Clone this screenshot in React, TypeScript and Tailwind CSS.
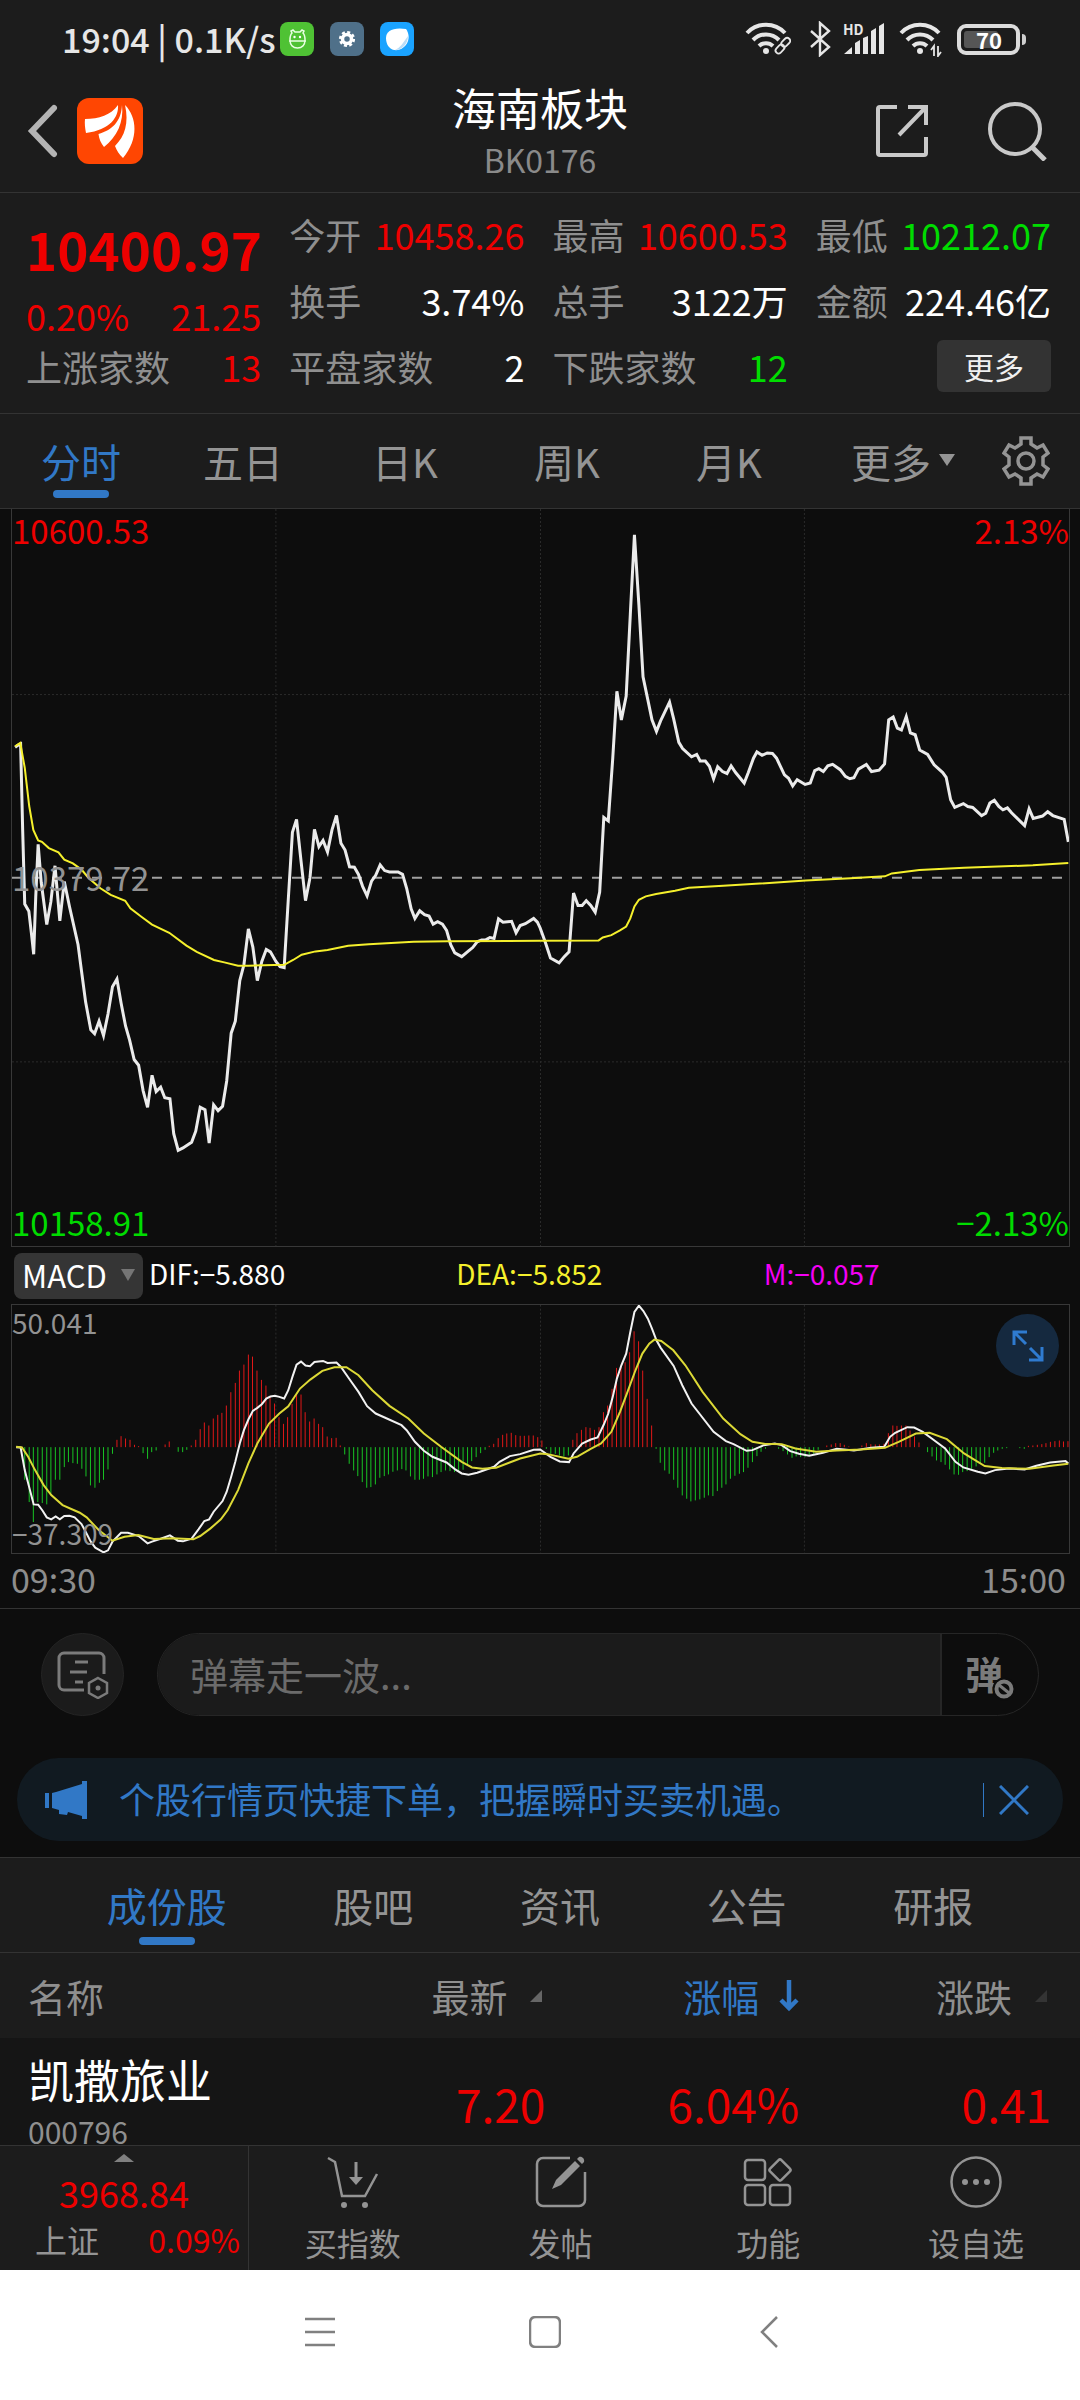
import React from "react";

const PRICE_LINE =
  "42,517 50,513 58,510 64,690 70,845 82,860 90,910 96,950 102,830 109,720 118,800 134,888 146,840 158,765 172,880 185,798 200,850 225,930 235,985 247,1050 262,1108 273,1116 286,1090 299,1120 312,1075 325,1018 338,1002 350,1052 363,1100 375,1130 388,1170 401,1182 414,1235 427,1270 440,1203 452,1237 465,1228 477,1250 492,1252 503,1325 516,1360 530,1355 555,1343 567,1320 580,1270 594,1275 606,1345 619,1265 632,1277 645,1268 657,1215 670,1115 682,1090 695,1005 707,972 720,897 733,935 746,1005 759,965 772,940 784,945 800,965 812,976 824,978 836,835 848,695 860,668 873,755 886,838 899,790 912,689 925,725 937,712 950,736 963,690 976,660 989,718 1001,732 1014,767 1028,768 1040,783 1052,808 1065,828 1078,797 1090,785 1103,763 1116,775 1130,778 1155,778 1168,783 1180,812 1193,855 1204,875 1218,859 1232,867 1245,870 1257,887 1270,882 1284,887 1296,900 1308,930 1320,947 1340,955 1360,943 1372,936 1385,924 1398,920 1410,920 1422,915 1434,917 1447,876 1460,883 1485,881 1498,905 1510,890 1525,886 1549,875 1560,883 1568,895 1583,925 1598,958 1623,968 1638,955 1652,945 1665,822 1678,848 1690,848 1702,838 1715,848 1728,862 1741,820 1753,664 1766,671 1779,540 1791,400 1804,460 1818,410 1830,240 1842,73 1855,220 1867,370 1881,418 1893,460 1906,484 1918,462 1944,423 1956,458 1971,507 1982,520 2008,537 2023,532 2033,546 2048,546 2060,557 2072,583 2084,558 2098,568 2111,572 2123,556 2136,570 2161,592 2173,570 2188,540 2198,527 2213,534 2228,529 2243,530 2255,540 2278,575 2290,582 2302,598 2315,585 2338,595 2353,592 2366,566 2378,562 2391,568 2404,556 2418,553 2440,564 2455,578 2468,583 2480,581 2493,563 2516,553 2531,568 2553,565 2569,552 2581,460 2594,454 2606,477 2618,481 2632,453 2644,487 2658,491 2671,523 2694,532 2713,554 2738,570 2748,580 2761,627 2773,643 2798,635 2811,641 2825,643 2851,660 2863,655 2875,634 2888,628 2901,641 2913,648 2926,644 2938,654 2976,681 2989,646 3001,666 3028,661 3043,652 3058,660 3091,668 3103,715";

const AVERAGE_LINE =
  "42,515 57,508 70,560 83,640 95,690 109,712 120,715 140,728 168,737 185,752 210,760 235,773 255,790 290,812 320,826 362,838 377,854 410,872 440,888 490,905 540,932 570,945 620,962 650,967 690,974 720,974 824,972 850,962 875,951 915,944 950,941 1010,932 1070,929 1200,924 1300,923 1568,922 1738,921 1750,915 1775,910 1800,900 1818,892 1830,875 1842,850 1855,836 1875,829 1905,824 1960,817 2000,811 2100,807 2340,796 2470,791 2570,787 2590,781 2670,774 2800,769 3000,764 3103,759";

const DIF_LINE =
  "45,651 58,652 70,720 96,823 109,824 122,842 134,862 147,868 160,859 172,868 185,858 200,857 215,862 235,882 247,905 262,935 275,953 299,967 312,961 325,935 350,908 370,908 401,918 427,940 440,935 465,926 492,916 515,932 530,934 555,926 575,898 592,873 606,868 619,845 645,813 657,785 670,740 682,695 695,640 707,600 720,568 733,542 746,533 759,522 772,505 784,499 797,497 810,500 824,505 836,480 848,440 860,403 873,394 886,406 899,408 912,395 937,392 950,398 976,397 989,410 1014,447 1040,485 1065,528 1090,550 1116,562 1165,585 1180,600 1204,635 1230,662 1255,680 1296,697 1320,717 1340,730 1360,734 1385,728 1434,710 1450,695 1480,678 1510,672 1549,659 1568,658 1598,680 1625,694 1652,696 1665,670 1690,640 1715,628 1735,622 1753,583 1766,550 1779,500 1791,445 1804,405 1818,370 1830,305 1842,245 1855,226 1868,242 1881,265 1893,295 1906,330 1918,352 1956,407 1981,465 2008,520 2072,605 2108,633 2130,642 2168,662 2185,660 2218,645 2250,640 2270,645 2295,663 2320,671 2350,677 2390,668 2430,656 2480,661 2530,653 2568,650 2585,620 2600,608 2635,591 2655,592 2680,605 2710,628 2745,655 2775,695 2798,712 2840,725 2862,730 2890,720 2930,715 2976,718 3010,707 3050,697 3095,693 3103,700";

const DEA_LINE =
  "45,650 62,652 80,680 100,720 125,765 147,795 180,825 230,848 250,862 285,900 325,932 360,920 400,915 445,927 500,925 560,928 580,918 610,895 640,868 660,840 690,780 720,700 746,640 780,580 810,550 836,528 870,475 900,448 935,422 970,411 1005,411 1040,435 1080,480 1130,527 1185,565 1230,610 1280,650 1340,695 1370,712 1400,716 1440,713 1510,685 1568,670 1590,672 1650,686 1675,680 1715,656 1745,640 1775,605 1800,545 1820,490 1845,420 1865,370 1885,340 1900,328 1920,332 1955,360 1990,405 2040,485 2100,565 2150,612 2185,635 2220,641 2270,642 2310,655 2370,665 2430,661 2500,658 2570,653 2610,635 2660,610 2700,608 2750,627 2800,670 2860,708 2910,714 2990,716 3060,706 3103,701";

/* One histogram value per trading minute, starting with the third minute. */
const MACD_BARS = [
  -98, -165, -225, -165, -168, -172, -140, -98, -98, -60, -45, -48, -50, -65, -88, -115, -122, -107, -98, -67, -20,
  22, 33, 26, 22, 7, 3, -18, -35, -15, -10, 0, 8, 17, 0, -14, -15, -8, 5, 22, 54, 74, 65, 86, 97, 103, 125, 165, 193,
  230, 248, 278, 272, 230, 202, 185, 150, 131, 90, 70, 90, 130, 160, 158, 105, 77, 86, 70, 60, 32, 27, 28, 5, -22,
  -50, -70, -87, -105, -122, -120, -112, -92, -87, -82, -74, -70, -66, -70, -88, -98, -98, -95, -88, -90, -82, -75,
  -70, -72, -75, -72, -68, -55, -42, -30, -18, -8, 4, 10, 27, 37, 41, 43, 36, 34, 34, 35, 35, 30, 20, -5, -20, -20,
  -25, -28, -25, 22, 42, 52, 60, 58, 52, 60, 105, 125, 175, 238, 245, 255, 285, 348, 318, 230, 145, 65, -5, -47, -70,
  -80, -98, -122, -145, -155, -163, -160, -157, -152, -145, -147, -132, -122, -112, -95, -86, -80, -75, -62, -45, -27,
  -14, -5, 0, 0, -5, -12, -22, -32, -28, -30, -30, -24, -20, -8, 0, 5, 8, 12, 12, 7, 2, 0, 0, 5, 12, 9, 8, 8, 10, 42,
  65, 64, 65, 65, 50, 32, 14, 0, -15, -28, -40, -45, -53, -67, -82, -83, -75, -72, -65, -58, -50, -47, -30, -17, -10,
  -5, -3, 0, 0, -3, -5, 4, 5, 7, 9, 12, 16, 18, 20, 17, 18, 16,
];

const barPath = (positive: boolean) =>
  MACD_BARS.map((v, i) =>
    v !== 0 && v > 0 === positive ? `M${Math.round(70 + i * 12.74)} 651v${-v}` : ""
  ).join("");

const GRID_X = [800, 1569, 2336];

function StatusBar() {
  return (
    <div className="flex h-[70px] items-center justify-between pt-2 pr-[54px] pl-[62px] text-[#e6e6e6]">
      <div className="flex items-center">
        <span className="text-[34px] leading-[40px] font-medium">19:04 | 0.1K/s</span>
        <div className="ml-1 flex gap-4">
          <svg viewBox="0 0 34 34" className="size-[34px]">
            <rect width="34" height="34" rx="8" fill="#4fc234" />
            <g fill="none" stroke="#e9ffe3" strokeWidth="1.5">
              <path d="M10 18c0-4 1-6 2-7l-1-2 2-1 2 2h5l2-2 2 1-1 2c1 1 2 3 2 7 0 5-3 8-7.500 8S10 23 10 18z" />
              <path d="M9 19h17" />
            </g>
            <circle cx="14.500" cy="15" r="1.200" fill="#fff" />
            <circle cx="20" cy="15" r="1.200" fill="#fff" />
          </svg>
          <svg viewBox="0 0 34 34" className="size-[34px]">
            <rect width="34" height="34" rx="8" fill="#4f7089" />
            <circle cx="17" cy="17" r="4.500" fill="none" stroke="#fff" strokeWidth="3.500" />
            <circle cx="17" cy="17" r="6.800" fill="none" stroke="#fff" strokeWidth="2.600" strokeDasharray="3 2.340" />
          </svg>
          <svg viewBox="0 0 34 34" className="size-[34px]">
            <rect width="34" height="34" rx="8" fill="#1aa3ff" />
            <path d="M6 16C6 9 13 5 26 7c3 4 3 9 2 12-2 6-8 10-14 9C9 27 6 22 6 16z" fill="#fff" />
            <path d="M28 14c0 8-6 14-13 14 5-2 8-7 13-14z" fill="#b9dcf7" />
          </svg>
        </div>
      </div>
      <div className="flex items-center">
        <svg viewBox="0 0 46 36" className="h-9 w-[46px]" fill="none" stroke="currentColor">
          <g strokeWidth="4">
            <path d="M2 12a26 26 0 0 1 38 0" />
            <path d="M8 19a18 18 0 0 1 26 0" />
            <path d="M14 25a10 10 0 0 1 14 0" />
          </g>
          <circle cx="21" cy="30" r="3" fill="currentColor" stroke="none" />
          <rect x="30" y="25" width="10" height="6" rx="3" transform="rotate(-45 35 28)" strokeWidth="1.800" />
          <rect x="36" y="19" width="10" height="6" rx="3" transform="rotate(-45 40 22)" strokeWidth="1.800" />
        </svg>
        <svg viewBox="0 0 22 36" className="ml-[18px] h-9 w-[22px]" fill="none" stroke="currentColor" strokeWidth="2.400">
          <path d="M2 10l18 16-9 8V2l9 8L2 26" />
        </svg>
        <div className="relative ml-3 h-9 w-[42px]">
          <svg viewBox="0 0 42 36" className="h-9 w-[42px]" fill="currentColor">
            <path d="M1 33l8-7v7zM12 22l5-3v14h-5zM20 17l5-2v18h-5zM28 10l5-3v26h-5zM36 5l5-3v31h-5z" />
          </svg>
          <span className="absolute top-0 left-0 text-[14px] leading-4 font-bold">HD</span>
        </div>
        <svg viewBox="0 0 44 36" className="ml-[14px] h-9 w-11" fill="none" stroke="currentColor">
          <g strokeWidth="4">
            <path d="M2 12a26 26 0 0 1 38 0" />
            <path d="M8 19a18 18 0 0 1 26 0" />
            <path d="M14 25a10 10 0 0 1 14 0" />
          </g>
          <circle cx="21" cy="30" r="3" fill="currentColor" stroke="none" />
          <path d="M35 35V25l-3 4M39 25v10l3-4" strokeWidth="1.800" />
        </svg>
        <div className="ml-[14px] flex items-center gap-[2px]">
          <div className="flex h-[31px] w-[63px] items-center rounded-[9px] border-4 border-[#dcdcdc] p-[3px]">
            <div className="flex h-full w-[34px] items-center rounded-[3px] bg-[#565656] pl-3 text-[22px] leading-5 font-bold text-white">
              70
            </div>
          </div>
          <div className="h-[11px] w-1 rounded-r bg-[#cfcfcf]" />
        </div>
      </div>
    </div>
  );
}

function Header() {
  return (
    <header className="grid h-[123px] grid-cols-[1fr_auto_1fr] items-center border-b border-[#333] px-6 text-[#c9c9c9]">
      <div className="flex items-center gap-[17px]">
        <button aria-label="返回">
          <svg viewBox="0 0 36 54" className="h-[54px] w-9" fill="none" stroke="#b4b4b4" strokeWidth="6">
            <path d="M30 4L8 27l22 23" strokeLinecap="round" />
          </svg>
        </button>
        <svg viewBox="0 0 66 66" className="size-[66px]">
          <rect width="66" height="66" rx="12" fill="#ff4602" />
          <g fill="#fff">
            <path d="M8 21c14 0 26-4 33-14 1 12-8 25-32 28-1-5-1.500-10-1-14z" />
            <path d="M45 7c2 17-5 32-18 42-3-4-5-8-5.500-13C35 32 44 24 45 7z" />
            <path d="M48 7c12 12 14 34-2 53-4-4-6-7-8-12 10-10 14-23 10-41z" />
          </g>
        </svg>
      </div>
      <div className="text-center">
        <h1 className="text-[44px] leading-[56px] text-white">海南板块</h1>
        <p className="text-[32px] leading-[48px] text-[#8a8a8a]">BK0176</p>
      </div>
      <div className="flex items-center justify-end gap-[59px] pr-2">
        <button aria-label="分享">
          <svg viewBox="0 0 54 54" className="size-[54px]" fill="none" stroke="currentColor" strokeWidth="4">
            <path d="M22 3H5a2 2 0 0 0-2 2v44a2 2 0 0 0 2 2h44a2 2 0 0 0 2-2V33" />
            <path d="M33 3h18v18M51 3L24 31" />
          </svg>
        </button>
        <button aria-label="搜索">
          <svg viewBox="0 0 60 60" className="size-[60px]" fill="none" stroke="currentColor" strokeWidth="4">
            <circle cx="27" cy="28" r="25" />
            <path d="M44 46l13 13" strokeWidth="5" />
          </svg>
        </button>
      </div>
    </header>
  );
}

function Stat({ label, value, tone }: { label: string; value: string; tone: string }) {
  return (
    <div className="flex h-[66px] items-center justify-between whitespace-nowrap">
      <dt className="text-[#8f8f8f]">{label}</dt>
      <dd className={tone}>{value}</dd>
    </div>
  );
}

const RED = "text-[#ee0000]";
const GREEN = "text-[#00dc00]";

function Quote() {
  return (
    <section className="grid grid-cols-4 gap-x-7 border-b border-[#333] pt-2 pr-[29px] pb-[14px] pl-[26px] text-[36px] leading-[39px]">
      <dl>
        <div className={`flex h-24 items-center pb-[2px] text-[53px] font-bold ${RED}`}>10400.97</div>
        <div className={`flex h-9 items-center justify-between ${RED}`}>
          <span>0.20%</span>
          <span>21.25</span>
        </div>
        <Stat label="上涨家数" value="13" tone={RED} />
      </dl>
      <dl>
        <Stat label="今开" value="10458.26" tone={RED} />
        <Stat label="换手" value="3.74%" tone="text-white" />
        <Stat label="平盘家数" value="2" tone="text-white" />
      </dl>
      <dl>
        <Stat label="最高" value="10600.53" tone={RED} />
        <Stat label="总手" value="3122万" tone="text-white" />
        <Stat label="下跌家数" value="12" tone={GREEN} />
      </dl>
      <div>
        <dl>
          <Stat label="最低" value="10212.07" tone={GREEN} />
          <Stat label="金额" value="224.46亿" tone="text-white" />
        </dl>
        <div className="flex h-[66px] items-center justify-end">
          <button className="h-[52px] w-[114px] rounded-md bg-[#333] text-[30px] leading-[40px] text-[#f0f0f0]">更多</button>
        </div>
      </div>
    </section>
  );
}

function PeriodTabs() {
  return (
    <nav className="flex h-[95px] border-b border-[#333] text-[40px] leading-[48px] text-[#949494]">
      {["分时", "五日", "日K", "周K", "月K", "更多"].map((t, i) => (
        <button key={t} className={`relative w-[15%] ${i === 0 ? "text-[#3178c6]" : ""}`}>
          {t}
          {i === 0 && (
            <span className="absolute bottom-[10px] left-1/2 h-2 w-14 -translate-x-1/2 rounded-full bg-[#3178c6]" />
          )}
          {i === 5 && (
            <svg viewBox="0 0 16 12" className="absolute top-10 right-[17px] h-3 w-4" fill="currentColor">
              <path d="M0 0h16L8 12z" />
            </svg>
          )}
        </button>
      ))}
      <button aria-label="设置" className="flex flex-1 items-center justify-center">
        <svg viewBox="0 0 48 50" className="h-[50px] w-12" fill="none" stroke="currentColor" strokeWidth="3.500">
          <path d="M19 2h10v6l6 4 6-3 5 8-5 4v8l5 4-5 8-6-3-6 4v6H19v-6l-6-4-6 3-5-8 5-4v-8l-5-4 5-8 6 3 6-4z" />
          <circle cx="24" cy="25" r="8" />
        </svg>
      </button>
    </nav>
  );
}

function PriceChart() {
  return (
    <div className="relative mr-[10px] ml-[11px] h-[738px] border-x border-b border-[#383838] text-[33px] leading-10">
      <svg viewBox="33 19 3072 1541" preserveAspectRatio="none" className="size-full" fill="none">
        <g stroke="#2b2b2b" strokeDasharray="2 2">
          {GRID_X.map((x) => (
            <path key={x} d={`M${x} 19V1560`} vectorEffect="non-scaling-stroke" />
          ))}
          <path d="M33 407H3105" vectorEffect="non-scaling-stroke" />
          <path d="M33 1175H3105" vectorEffect="non-scaling-stroke" />
        </g>
        <path d="M33 790H3105" stroke="#a0a0a0" strokeWidth="2" strokeDasharray="10 10" vectorEffect="non-scaling-stroke" />
        <polyline points={PRICE_LINE} stroke="#ebebeb" strokeWidth="3" vectorEffect="non-scaling-stroke" />
        <polyline points={AVERAGE_LINE} stroke="#f5f02c" strokeWidth="2" vectorEffect="non-scaling-stroke" />
      </svg>
      <span className={`absolute top-[1px] left-0 ${RED}`}>10600.53</span>
      <span className={`absolute top-[1px] right-0 ${RED}`}>2.13%</span>
      <span className="absolute top-[348px] left-0 text-[#929292]">10379.72</span>
      <span className={`absolute bottom-1 left-0 ${GREEN}`}>10158.91</span>
      <span className={`absolute right-0 bottom-1 ${GREEN}`}>−2.13%</span>
    </div>
  );
}

function MacdPanel() {
  return (
    <section className="border-b border-[#333]">
      <div className="flex h-[57px] items-center pr-[9px] pl-[14px] text-[28px] leading-8">
        <div className="relative mr-[6px] w-[129px]">
          <select
            aria-label="指标"
            className="h-[46px] w-full appearance-none rounded-lg bg-[#353535] pb-[2px] pl-2 text-[31px] leading-10 text-white"
          >
            <option>MACD</option>
          </select>
          <svg viewBox="0 0 14 12" className="pointer-events-none absolute top-4 right-2 h-3 w-[14px]" fill="#757575">
            <path d="M0 0h14L7 12z" />
          </svg>
        </div>
        <span className="flex-1 pb-[6px] text-white">DIF:−5.880</span>
        <span className="flex-1 pb-[6px] text-[#f5f02c]">DEA:−5.852</span>
        <span className="flex-1 pb-[6px] text-[#f400f4]">M:−0.057</span>
      </div>
      <div className="relative mr-[10px] ml-[11px] h-[250px] border border-[#383838] text-[28px] leading-8 text-[#929292]">
        <svg viewBox="33 224 3072 745" preserveAspectRatio="none" className="size-full" fill="none">
          <g stroke="#2b2b2b" strokeDasharray="2 2">
            {GRID_X.map((x) => (
              <path key={x} d={`M${x} 223V970`} vectorEffect="non-scaling-stroke" />
            ))}
          </g>
          <path d={barPath(true)} stroke="#e01818" strokeWidth="1" vectorEffect="non-scaling-stroke" />
          <path d={barPath(false)} stroke="#18c424" strokeWidth="1" vectorEffect="non-scaling-stroke" />
          <polyline points={DIF_LINE} stroke="#f2f2f2" strokeWidth="2" vectorEffect="non-scaling-stroke" />
          <polyline points={DEA_LINE} stroke="#dcd936" strokeWidth="2" vectorEffect="non-scaling-stroke" />
        </svg>
        <span className="absolute top-[1px] left-0">50.041</span>
        <span className="absolute bottom-1 left-0">−37.309</span>
        <button
          aria-label="全屏"
          className="absolute top-[9px] right-[10px] flex size-[63px] items-center justify-center rounded-full bg-[#15293f]"
        >
          <svg viewBox="0 0 32 32" className="size-8" fill="none" stroke="#2f7bd0" strokeWidth="3">
            <path d="M15 2H2v13M2 2l12 12M30 17v13H17M30 30L18 18" />
          </svg>
        </button>
      </div>
      <div className="flex h-[54px] items-center justify-between pr-[14px] pb-1 pl-[11px] text-[34px] leading-10 text-[#8d8d8d]">
        <span>09:30</span>
        <span>15:00</span>
      </div>
    </section>
  );
}

function Danmaku() {
  return (
    <section className="flex gap-[33px] pt-6 pr-[41px] pb-[42px] pl-[41px]">
      <button
        aria-label="弹幕设置"
        className="flex size-[83px] items-center justify-center rounded-full border border-[#242424] bg-[#1b1b1b]"
      >
        <svg viewBox="0 0 52 48" className="h-12 w-[52px]" fill="none" stroke="#7b7b7b" strokeWidth="3">
          <path d="M27 39H7a5 5 0 0 1-5-5V7a5 5 0 0 1 5-5h35a5 5 0 0 1 5 5v16" />
          <path d="M18 11h13M13 21h17M18 31h8" />
          <path d="M41 27l9 5v10l-9 5-9-5V32z" strokeWidth="2.500" />
          <circle cx="41" cy="37" r="2.500" fill="#7b7b7b" stroke="none" />
        </svg>
      </button>
      <div className="flex h-[83px] min-w-0 flex-1 overflow-hidden rounded-full border border-[#262626]">
        <input
          aria-label="弹幕"
          placeholder="弹幕走一波..."
          className="min-w-0 flex-1 border-r-2 border-[#262626] bg-[#1b1b1b] pb-[2px] pl-8 text-[38px] outline-none placeholder:text-[#6b6b6b]"
        />
        <button aria-label="关闭弹幕" className="relative w-24 pr-3 pb-1 text-[38px] leading-[48px] font-bold text-[#7b7b7b]">
          弹
          <svg viewBox="0 0 24 24" className="absolute top-[43px] right-[22px] size-6" fill="#0d0d0d" stroke="#7b7b7b">
            <circle cx="12" cy="12" r="11.500" stroke="none" />
            <circle cx="12" cy="12" r="7.500" strokeWidth="4" />
            <path d="M7 8l10 8" strokeWidth="3" />
          </svg>
        </button>
      </div>
    </section>
  );
}

function Notice() {
  return (
    <section className="mx-[17px] mb-4 flex h-[83px] items-center rounded-full bg-[#111a21] pr-[34px] pl-7 text-[#3178c6]">
      <svg viewBox="0 0 42 38" className="h-[38px] w-[42px]" fill="currentColor">
        <path d="M0 12h4v15H0zM7 12l4-1L37 3V0h5v38h-5v-3l-14-4-1 3-8-1v-4l-7-2z" />
      </svg>
      <p className="ml-8 flex-1 pb-1 text-[36px] leading-[48px]">个股行情页快捷下单，把握瞬时买卖机遇。</p>
      <div className="h-[34px] w-px bg-[#3178c6]" />
      <button aria-label="关闭" className="ml-[15px]">
        <svg viewBox="0 0 30 30" className="size-[30px]" fill="none" stroke="currentColor" strokeWidth="3">
          <path d="M1 1l28 28M29 1L1 29" />
        </svg>
      </button>
    </section>
  );
}

function SectionTabs() {
  return (
    <nav className="flex h-24 justify-evenly border-y border-[#333] bg-[#1c1c1c] text-[40px] leading-[48px] text-[#949494]">
      {["成份股", "股吧", "资讯", "公告", "研报"].map((t, i) => (
        <button key={t} className={`relative ${i === 0 ? "text-[#3178c6]" : ""}`}>
          {t}
          {i === 0 && (
            <span className="absolute bottom-[7px] left-1/2 h-2 w-14 -translate-x-1/2 rounded-full bg-[#3178c6]" />
          )}
        </button>
      ))}
    </nav>
  );
}

function SortIcon({ tone }: { tone: string }) {
  return (
    <svg viewBox="0 0 12 12" className={`mr-[3px] ml-[23px] h-3 w-3 ${tone}`} fill="currentColor">
      <path d="M12 0v12H0z" />
    </svg>
  );
}

function StockTable() {
  return (
    <table className="w-full table-fixed">
      <thead className="bg-[#1c1c1c] text-[38px] leading-[48px] text-[#8f8f8f]">
        <tr className="h-[85px]">
          <th className="w-[27%] pl-7 text-left font-normal">名称</th>
          <th className="w-[23.5%] text-right font-normal">
            <button className="inline-flex items-center">
              最新
              <SortIcon tone="text-[#666]" />
            </button>
          </th>
          <th className="w-[23.5%] text-right font-normal">
            <button className="inline-flex items-center text-[#3178c6]">
              涨幅
              <svg viewBox="0 0 20 32" className="ml-5 h-8 w-5" fill="none" stroke="currentColor" strokeWidth="4.500">
                <path d="M10 0v28M2 20l8 8 8-8" />
              </svg>
            </button>
          </th>
          <th className="pr-[30px] text-right font-normal">
            <button className="inline-flex items-center">
              涨跌
              <SortIcon tone="text-[#343434]" />
            </button>
          </th>
        </tr>
      </thead>
      <tbody className="bg-[#151515] text-right text-[46px] leading-[64px] text-[#ee0000]">
        <tr className="h-[136px]">
          <td className="pb-4 pl-7 text-left whitespace-nowrap text-white">
            <div className="leading-[66px]">凯撒旅业</div>
            <div className="text-[30px] leading-10 text-[#8f8f8f]">000796</div>
          </td>
          <td className="pb-[6px]">7.20</td>
          <td className="pb-[6px]">6.04%</td>
          <td className="pr-[29px] pb-[6px]">0.41</td>
        </tr>
      </tbody>
    </table>
  );
}

const ACTIONS = [
  {
    label: "买指数",
    icon: (
      <>
        <path d="M1 2l7 4 7 34h23l12-22" />
        <path d="M29 6v18" strokeWidth="3" />
        <path d="M22 21h14l-7 8z" fill="currentColor" stroke="none" />
        <circle cx="17" cy="49" r="3" fill="currentColor" stroke="none" />
        <circle cx="38" cy="49" r="3" fill="currentColor" stroke="none" />
      </>
    ),
  },
  {
    label: "发帖",
    icon: (
      <>
        <path d="M35 2H8a6 6 0 0 0-6 6v36a6 6 0 0 0 6 6h36a6 6 0 0 0 6-6V16" />
        <path d="M17 33l4-9L40 5l5 5-19 19zM42 3l2-2c3-1 6 2 5 5l-2 2z" fill="currentColor" stroke="none" />
      </>
    ),
  },
  {
    label: "功能",
    icon: (
      <>
        <rect x="3" y="4" width="20" height="20" rx="3" />
        <rect x="3" y="29" width="20" height="20" rx="3" />
        <rect x="28" y="29" width="20" height="20" rx="3" />
        <rect x="30" y="6" width="16" height="16" rx="2" transform="rotate(45 38 14)" />
      </>
    ),
  },
  {
    label: "设自选",
    icon: (
      <>
        <circle cx="26" cy="26" r="24.500" />
        <g fill="currentColor" stroke="none">
          <circle cx="15" cy="26" r="3" />
          <circle cx="26" cy="26" r="3" />
          <circle cx="37" cy="26" r="3" />
        </g>
      </>
    ),
  },
];

function BottomBar() {
  return (
    <footer className="flex h-[125px] border-t border-[#333] bg-[#1c1c1c] text-[32px] leading-10 text-[#949494]">
      <button className="relative flex w-[249px] flex-col border-r border-[#333] pt-6">
        <svg viewBox="0 0 20 8" className="absolute top-2 left-1/2 h-2 w-5 -translate-x-1/2" fill="#808080">
          <path d="M0 8l10-8 10 8z" />
        </svg>
        <div className="w-full text-center text-[36px] leading-[44px] text-[#ee0000]">3968.84</div>
        <div className="flex w-full justify-between pt-[5px] pr-2 pl-[35px]">
          <span>上证</span>
          <span className="text-[#ee0000]">0.09%</span>
        </div>
      </button>
      {ACTIONS.map((a) => (
        <button key={a.label} className="flex flex-1 flex-col items-center gap-[14px] pt-[10px]">
          <svg viewBox="0 0 52 52" className="size-[52px]" fill="none" stroke="currentColor" strokeWidth="2.500">
            {a.icon}
          </svg>
          {a.label}
        </button>
      ))}
    </footer>
  );
}

function SystemNav() {
  return (
    <div className="flex h-[130px] items-center justify-center bg-white pb-[6px] pl-[10px]">
      {[
        { label: "最近任务", d: "M1 3h30M1 16h30M1 29h30" },
        { label: "主屏幕", d: "M7 1h18q6 0 6 6v18q0 6-6 6H7q-6 0-6-6V7q0-6 6-6z" },
        { label: "后退", d: "M23 1L8 16l15 15" },
      ].map((b) => (
        <button key={b.label} aria-label={b.label} className="flex w-[225px] justify-center">
          <svg viewBox="0 0 32 32" className="size-8" fill="none" stroke="#808080" strokeWidth="2.500">
            <path d={b.d} />
          </svg>
        </button>
      ))}
    </div>
  );
}

export default function App() {
  return (
    <div className="flex h-screen flex-col bg-[#0d0d0d] font-['Noto_Sans_CJK_SC',sans-serif]">
      <div className="bg-[#1c1c1c]">
        <StatusBar />
        <Header />
      </div>
      <main className="min-h-0 flex-1 overflow-hidden">
        <div className="bg-[#1c1c1c]">
          <Quote />
          <PeriodTabs />
        </div>
        <PriceChart />
        <MacdPanel />
        <Danmaku />
        <Notice />
        <SectionTabs />
        <StockTable />
      </main>
      <BottomBar />
      <SystemNav />
    </div>
  );
}
